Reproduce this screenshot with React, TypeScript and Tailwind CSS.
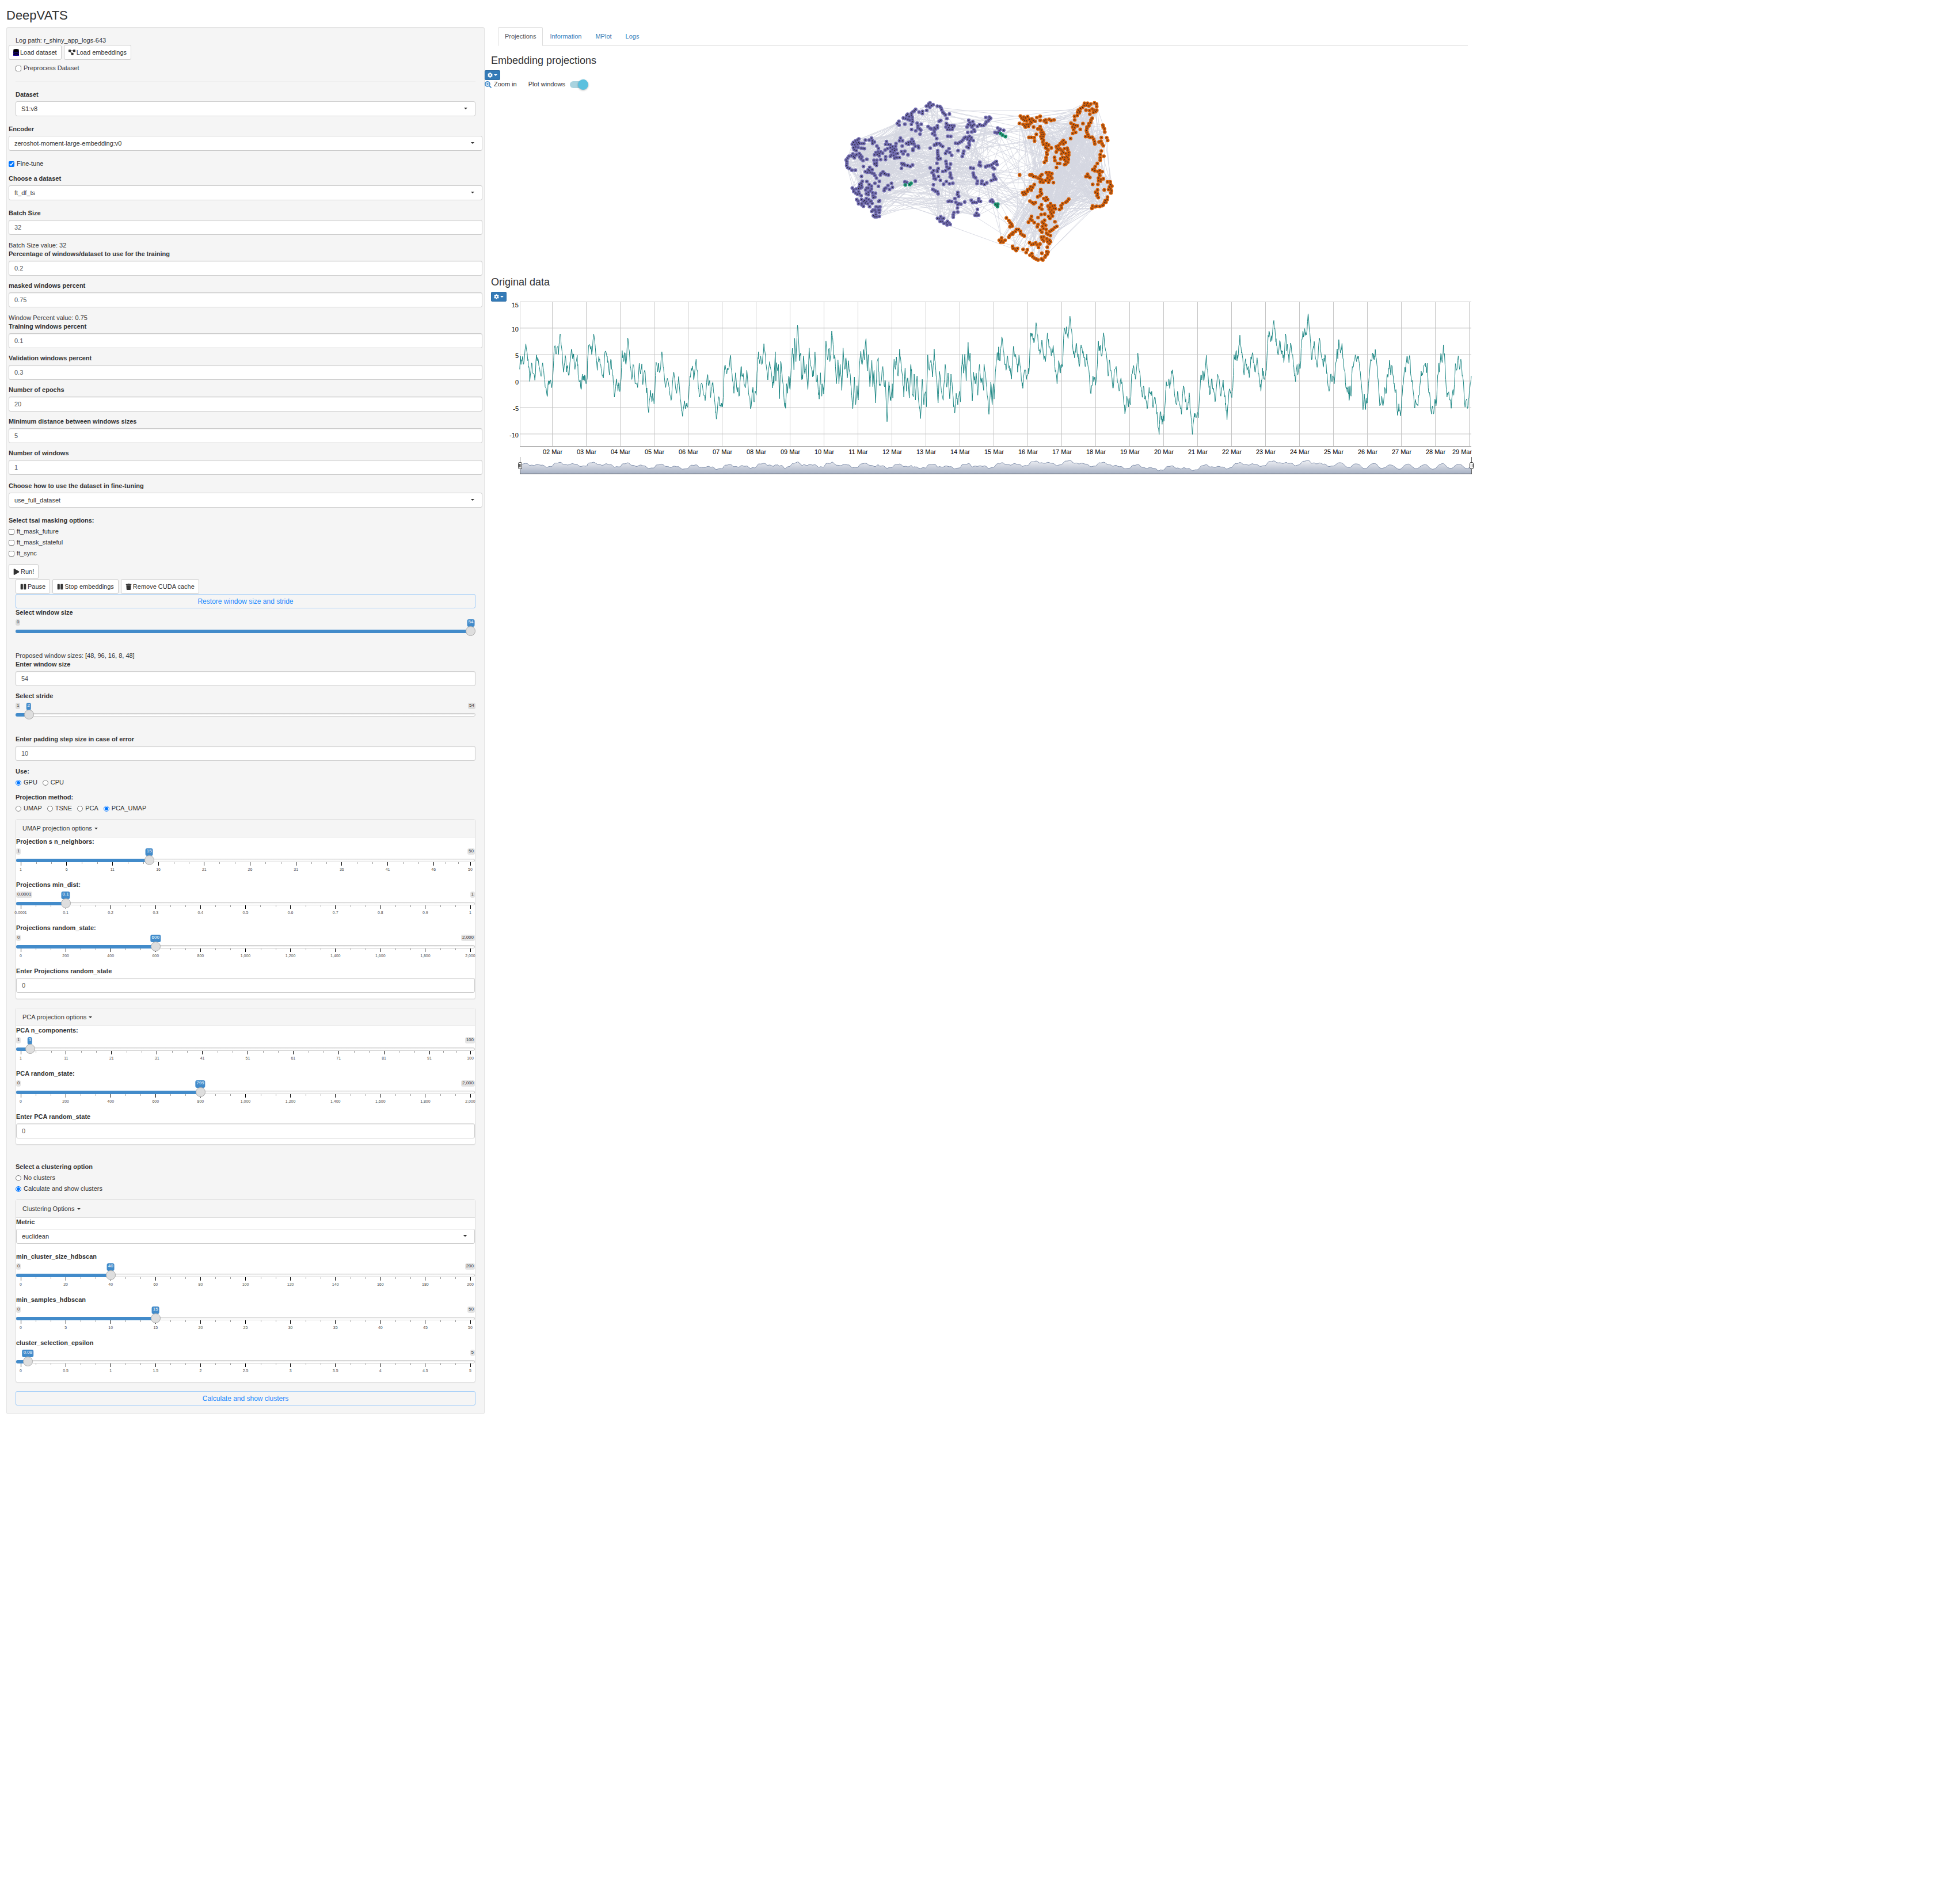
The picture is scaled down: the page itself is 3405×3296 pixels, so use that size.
import React, { useId, useState } from "react";
import { FaCog, FaPause, FaPlay, FaSearchPlus, FaTrash } from "react-icons/fa";
import { FaDiagramProject } from "react-icons/fa6";

/* ---------- form building blocks ---------- */

const labelClass = "block text-[11px] leading-[15px] font-bold";

function Caret({ className = "" }: { className?: string }) {
  return (
    <span
      aria-hidden
      className={`inline-block h-0 w-0 border-x-3 border-t-3 border-x-transparent border-t-current ${className}`}
    />
  );
}

function NumberField({ label, value, className = "" }: { label: string; value: string; className?: string }) {
  const id = useId();
  return (
    <div className={`mb-[10px] ${className}`}>
      <label htmlFor={id} className={`${labelClass} mb-1`}>
        {label}
      </label>
      <input
        id={id}
        type="number"
        step="any"
        defaultValue={value}
        className="block h-[26px] w-full rounded-[3px] border border-[#ccc] bg-white px-[9px] text-[11px] text-[#555] shadow-[inset_0_1px_1px_rgba(0,0,0,0.075)]"
      />
    </div>
  );
}

function SelectField({ label, value, className = "" }: { label: string; value: string; className?: string }) {
  const id = useId();
  return (
    <div className={`mb-[15px] ${className}`}>
      <label htmlFor={id} className={`${labelClass} mb-1`}>
        {label}
      </label>
      <div className="relative">
        <select
          id={id}
          className="block h-[26px] w-full appearance-none rounded-[3px] border border-[#ccc] bg-white px-[9px] text-[11px] text-[#333]"
        >
          <option>{value}</option>
        </select>
        <Caret className="pointer-events-none absolute top-[11px] right-[14px]" />
      </div>
    </div>
  );
}

function Tick({ type, name, label, checked = false }: { type: "checkbox" | "radio"; name: string; label: string; checked?: boolean }) {
  return (
    <label className="flex h-[15px] items-center gap-1 text-[11px] leading-[15px]">
      <input type={type} name={name} defaultChecked={checked} className="size-[10px]" />
      {label}
    </label>
  );
}

type SliderProps = {
  label: string;
  min: number;
  max: number;
  value: number;
  step?: number;
  ticks?: number[];
  showMin?: boolean;
};

const fmt = (n: number) => n.toLocaleString("en-US", { maximumFractionDigits: 4 });

function SliderField({ label, min, max, value, step = 1, ticks = [], showMin = true }: SliderProps) {
  const id = useId();
  const [current, setCurrent] = useState(value);
  const pct = (n: number) => ((n - min) / (max - min)) * 100;
  const minor = ticks
    .slice(0, -1)
    .flatMap((t, i) => [t + (ticks[i + 1] - t) / 3, t + ((ticks[i + 1] - t) * 2) / 3]);
  const pill = "h-[11px] rounded-[3px] px-[2px] text-[8px] leading-[10px]";
  return (
    <div className="h-[75px]">
      <label htmlFor={id} className={labelClass}>
        {label}
      </label>
      <div className="relative pt-1">
        <div className="flex h-3 justify-between">
          <span className={`${pill} bg-black/10 ${showMin ? "" : "invisible"}`}>{fmt(min)}</span>
          <span className={`${pill} bg-black/10 ${current === max ? "invisible" : ""}`}>{fmt(max)}</span>
        </div>
        <div className="absolute inset-x-2 top-1">
          <span
            className="absolute top-0 h-[13px] -translate-x-1/2 rounded-[3px] bg-[#428bca] px-[2px] text-[8px] leading-[10px] text-white"
            style={{ left: `${pct(current)}%` }}
          >
            {fmt(current)}
          </span>
        </div>
        <div className="mt-[6px] h-[6px] rounded-[4px] bg-[#ccc] bg-gradient-to-b from-[#dedede] to-white to-60% shadow-[inset_0_0_0_1px_#ccc]">
          <div className="h-[6px] rounded-l-[4px] bg-[#428bca]" style={{ width: `${Math.max(1, pct(current) * 0.98 + 1)}%` }} />
        </div>
        <div className="absolute inset-x-2 top-[28px]">
          {minor.map((t) => (
            <span key={t} className="absolute h-[3px] w-px bg-[#999]" style={{ left: `${pct(t)}%` }} />
          ))}
          {ticks.map((t) => (
            <span key={t} className="absolute flex w-0 flex-col items-center" style={{ left: `${pct(t)}%` }}>
              <span className="h-[6px] w-px shrink-0 bg-black" />
              <span className="mt-[2px] text-[7px] leading-[10px] text-[#555]">{fmt(t)}</span>
            </span>
          ))}
        </div>
        <input
          id={id}
          type="range"
          min={min}
          max={max}
          step={step}
          value={current}
          onChange={(e) => setCurrent(Number(e.target.value))}
          className="absolute inset-x-0 top-4 h-[17px] w-full appearance-none bg-transparent [&::-webkit-slider-thumb]:size-[17px] [&::-webkit-slider-thumb]:appearance-none [&::-webkit-slider-thumb]:rounded-full [&::-webkit-slider-thumb]:border [&::-webkit-slider-thumb]:border-[#ababab] [&::-webkit-slider-thumb]:bg-[#dedede]"
        />
      </div>
    </div>
  );
}

function IconButton({ icon, children }: { icon: React.ReactNode; children: React.ReactNode }) {
  return (
    <button
      type="button"
      className="flex h-[26px] items-center gap-[2px] rounded-[3px] border border-[#ccc] bg-white px-[7px] text-[11px] leading-[15px] whitespace-nowrap"
    >
      {icon}
      {children}
    </button>
  );
}

function OutlineButton({ children }: { children: React.ReactNode }) {
  return (
    <button type="button" className="block h-[25px] w-full rounded-[3px] border border-[#99c9f9] text-center text-xs text-[#1d89ff]">
      {children}
    </button>
  );
}

function Panel({ title, className = "", children }: { title: string; className?: string; children: React.ReactNode }) {
  return (
    <section className={`rounded-[3px] border border-[#ddd] bg-white shadow-[0_1px_1px_rgba(0,0,0,0.05)] ${className}`}>
      <button
        type="button"
        className="flex h-[31px] w-full items-center gap-1 border-b border-[#ddd] bg-[#f5f5f5] px-[11px] text-[11px]"
      >
        {title}
        <Caret />
      </button>
      {children}
    </section>
  );
}

function GearButton({ className = "" }: { className?: string }) {
  return (
    <button
      type="button"
      aria-label="Plot options"
      className={`flex h-[17px] w-[27px] items-center justify-center gap-[2px] rounded-[2px] border border-[#2e6da4] bg-[#337ab7] text-white ${className}`}
    >
      <FaCog size={9} />
      <Caret />
    </button>
  );
}

function DatabaseIcon() {
  return (
    <svg width="10" height="12" viewBox="0 0 10 12" aria-hidden>
      <rect y="3" width="10" height="9" fill="#2a0bd0" />
      <ellipse cx="5" cy="2" rx="4.8" ry="1.9" />
      <path d="M.2 2.6Q5 5 9.8 2.6V4.4Q5 7 .2 4.4Z" />
      <path d="M.2 5.4Q5 7.8 9.8 5.4V7.4Q5 10 .2 7.4Z" />
      <path d="M.2 8.4Q5 10.8 9.8 8.4V10.2Q5 12.8 .2 10.2Z" />
    </svg>
  );
}

/* ---------- embedding scatter ---------- */

const PURPLE = `527,86;520,92;508,103;517,102;543,96;535,100;526,108;510,125;488,130;470,134;487,142;452,120;445,128;438,133;430,140;410,145;405,152;418,158;430,150;434,160;388,165;400,168;412,172;422,176;434,172;436,184;365,182;357,193;366,202;396,197;430,198;460,192;481,197;464,206;464,217;431,225;453,232;473,222;479,228;475,249;565,103;578,105;584,112;588,122;594,135;600,142;607,149;628,144;615,168;583,178;575,182;517,210;527,218;533,222;550,217;565,206;566,216;556,222;548,228;549,238;540,247;552,254;562,272;612,194;618,202;628,205;640,205;652,206;610,212;625,215;645,215;618,224;630,225;642,224;620,260;635,261;729,177;735,190;750,184;726,200;738,202;748,206;720,212;745,212;756,200;774,208;785,200;795,204;806,204;815,196;820,186;818,162;836,160;843,166;835,172;830,180;724,240;744,238;756,226;760,234;880,217;893,224;888,232;911,229;866,240;876,243;884,240;733,260;742,268;725,266;712,265;705,270;722,275;740,275;733,284;752,283;698,280;690,288;682,292;672,298;660,296;730,296;732,306;720,316;728,320;673,335;703,338;700,350;695,365;562,298;575,298;550,306;560,304;583,306;593,313;528,322;567,336;567,346;568,356;570,365;566,374;580,377;570,380;608,349;615,338;626,325;630,345;640,359;563,401;610,391;634,405;612,404;615,420;622,430;608,440;594,444;628,426;528,425;570,428;565,437;565,444;545,440;538,450;546,462;548,468;571,470;556,483;548,480;632,452;634,462;632,472;640,478;581,490;612,496;628,508;646,505;598,510;545,513;541,537;548,541;556,546;566,550;569,560;739,425;753,427;787,396;783,410;790,414;817,420;826,415;836,414;848,410;857,402;866,396;873,392;876,408;855,424;862,430;752,452;754,462;757,472;765,477;774,494;772,507;798,494;795,507;811,511;823,503;846,491;858,487;866,481;858,462;862,472;870,484;672,553;670,563;676,573;657,585;630,598;622,600;640,600;662,604;678,612;688,614;672,616;708,603;742,594;750,606;758,604;768,606;780,598;781,586;790,600;850,592;842,598;855,602;670,634;672,655;652,658;648,670;648,682;774,641;770,661;762,672;772,672;780,671;566,688;575,690;583,680;590,690;598,688;580,704;590,704;600,714;612,712;618,704;626,712;632,720;616,722;156,274;148,280;138,285;128,292;143,295;155,292;122,302;135,305;150,302;160,298;128,320;140,316;152,318;132,330;142,335;168,322;178,323;185,325;172,298;182,298;190,280;210,280;222,270;226,282;228,290;237,290;228,298;250,311;258,323;238,357;245,345;252,355;262,350;270,342;262,362;256,342;280,348;293,332;300,288;296,302;310,303;305,325;320,305;320,320;332,315;340,325;350,298;348,312;330,330;343,335;350,330;322,340;335,345;350,352;358,350;325,358;320,365;338,360;350,370;342,374;355,372;367,371;373,270;368,284;384,284;382,311;378,340;396,338;387,352;412,357;404,298;415,292;425,290;433,276;440,288;432,298;415,302;443,300;450,312;465,312;468,320;438,327;438,334;296,367;295,382;270,382;250,385;235,385;238,402;248,400;248,412;240,405;105,364;117,362;125,352;128,365;137,360;145,356;158,350;165,358;160,368;172,368;168,378;178,387;198,380;98,374;90,384;94,392;94,402;93,413;98,424;108,428;120,437;138,437;133,372;180,418;213,422;225,434;205,435;190,445;200,448;215,448;225,452;235,456;240,465;248,478;210,440;268,462;272,454;282,446;290,455;298,460;310,462;170,469;380,402;378,427;390,404;395,410;410,413;424,418;436,410;384,408;174,495;198,496;168,505;160,512;170,516;158,524;172,525;122,530;130,540;142,535;155,533;165,530;130,548;140,556;155,550;158,560;148,562;168,570;145,590;152,598;155,612;170,590;180,600;172,610;185,596;195,600;180,625;172,618;195,585;208,590;215,600;190,608;203,612;212,627;225,610;220,598;205,552;195,560;205,565;192,540;205,530;210,512;198,530;222,535;215,545;228,555;230,570;243,557;240,577;232,580;240,505;263,495;258,521;222,520;290,535;297,530;288,544;308,517;326,505;331,526;316,537;396,498;406,500;450,494;264,596;260,600;246,628;256,630;266,628;230,645;224,652;240,645;258,645;265,645;245,655;262,658;232,674;240,680;250,680;262,678;245,668`;

const ORANGE = `998,155;1005,165;1016,160;1025,165;1036,158;1012,172;1020,178;1030,180;1045,172;1058,170;1065,178;1074,182;1050,182;993,193;1012,198;1020,206;1028,200;1038,198;1048,196;1055,188;1025,212;1040,208;1067,212;1101,156;1084,163;1101,177;1122,180;1130,175;1132,188;1148,172;1158,178;1173,175;1101,210;1089,222;1100,222;1108,228;1115,240;1106,240;1120,250;1110,252;1081,250;1105,262;1116,262;1110,272;1118,280;1115,290;1043,266;1055,266;1070,267;1072,285;1118,302;1134,298;1132,310;1145,306;1130,320;1136,325;1142,332;1135,345;1137,355;1132,372;1132,386;1123,396;1159,321;1185,315;1195,310;1205,300;1215,290;1222,282;1232,292;1222,300;1190,325;1204,325;1185,342;1195,330;1210,332;1218,338;1228,325;1242,322;1245,332;1250,345;1212,352;1222,346;1235,350;1250,358;1240,365;1230,372;1218,370;1208,378;1228,382;1245,372;1248,380;1235,390;1245,395;1235,405;1228,408;1176,370;1178,387;1192,402;1203,402;1186,423;1260,272;1332,88;1348,88;1365,92;1384,86;1395,92;1396,105;1355,102;1342,98;1330,100;1322,110;1312,115;1300,124;1308,130;1296,135;1305,138;1340,124;1358,126;1372,118;1382,124;1396,124;1390,132;1378,135;1360,145;1294,152;1280,156;1281,175;1324,194;1262,192;1275,200;1286,204;1295,206;1270,212;1280,216;1275,226;1310,224;1286,240;1271,245;1372,166;1366,176;1364,188;1355,195;1355,206;1345,212;1345,220;1342,230;1345,240;1350,252;1338,262;1352,262;1362,266;1372,265;1380,276;1384,288;1386,300;1428,202;1430,212;1436,222;1438,238;1420,267;1448,268;1453,282;1408,290;1418,286;1424,300;1430,310;1420,337;1414,356;1433,364;1414,372;1414,385;1399,402;1388,418;1375,434;1386,440;1383,430;1402,444;1412,440;1424,445;1410,456;1412,465;1405,478;1418,485;1430,482;1406,492;1416,494;1375,511;1402,511;1348,458;1340,470;1350,468;1360,475;1452,498;1466,498;1468,512;1475,520;1462,525;1468,535;1458,538;1472,545;1470,556;1435,540;1400,540;1390,552;1400,560;1398,570;1404,580;1452,577;1450,590;1440,596;1436,606;1444,604;1430,618;1425,622;1412,626;1395,625;1388,628;1374,624;1371,636;994,462;1048,462;1058,462;1066,470;1078,472;1090,478;1102,468;1110,460;1100,482;1110,488;1102,498;1116,500;1133,450;1148,450;1162,455;1142,462;1155,468;1140,478;1162,478;1150,488;1130,490;1145,500;1170,502;1070,512;1052,524;1062,526;1045,535;1035,540;1055,540;1010,555;1020,552;1026,560;1015,564;1036,546;1104,538;1103,550;1108,560;1100,570;1088,576;1120,585;1133,580;1140,590;1130,594;1048,598;1060,606;1068,612;1076,606;1108,618;1098,632;1110,640;1155,612;1142,624;1152,630;1165,624;1176,622;1172,635;1180,638;1148,640;1162,645;1155,655;1170,656;1160,665;1145,678;1165,676;1152,688;1250,588;1242,598;1235,604;1218,612;1210,622;1212,634;1202,642;1106,668;1125,666;1090,684;1056,678;1050,692;1058,698;1040,708;1070,710;1124,698;1112,708;1120,716;1130,724;1090,720;1086,732;1112,730;1118,742;1132,745;1102,750;1110,760;1178,706;1188,730;1178,736;1168,745;1160,750;1152,756;1134,765;1142,772;1154,778;1108,786;1120,785;1112,798;1120,806;1136,795;1150,802;1140,810;1155,810;1148,820;1138,838;925,686;938,700;944,710;952,718;955,728;944,732;978,746;988,746;972,756;960,762;950,770;958,770;942,778;938,786;998,756;1000,768;1010,775;1018,780;900,790;888,802;900,806;918,802;895,812;908,812;957,834;960,844;970,848;983,845;976,856;1012,850;1034,852;1028,866;1046,815;1056,825;1066,822;1078,816;1085,826;1092,840;1100,822;1058,872;1048,880;1062,888;1070,895;1080,900;1090,905;1110,870;1135,862;1142,864;1138,874;1130,882;1126,890;1108,900;1115,905`;

const GREEN = `895,246;905,254;920,262;398,514;421,512;428,505;869,615;880,614;876,620;879,627`;

type Pt = [number, number];

const parse = (s: string): Pt[] => s.split(";").map((p) => p.split(",").map(Number) as Pt);

const place = (s: string): Pt[] => parse(s).map(([x, y]) => [598 + x / 3, y / 3 - 6]);

function makeRandom(seed: number) {
  let s = seed;
  return () => {
    s = (s * 1664525 + 1013904223) % 4294967296;
    return s / 4294967296;
  };
}

const clusters = [
  { pts: place(PURPLE), rim: "#7570b3", core: "#6660a3" },
  { pts: place(ORANGE), rim: "#d95f02", core: "#bf5a14" },
  { pts: place(GREEN), rim: "#1b9e77", core: "#1f8c6c" },
];

function trajectories() {
  const rnd = makeRandom(17);
  const pick = (a: Pt[]) => a[Math.floor(rnd() * a.length)];
  const [purple, orange, green] = clusters.map((c) => c.pts);
  const left = purple.filter((p) => p[0] < 758);
  const middle = purple.filter((p) => p[0] >= 758);
  const east = orange.filter((p) => p[0] > 1000);
  const segs: [Pt, Pt][] = [];
  for (let i = 0; i < 300; i++) segs.push([pick(left), pick(left)]);
  for (let i = 0; i < 240; i++) segs.push([pick(left), pick(middle)]);
  for (let i = 0; i < 120; i++) segs.push([pick(middle), pick(middle)]);
  for (let i = 0; i < 300; i++) segs.push([pick(orange), pick(orange)]);
  for (let i = 0; i < 420; i++) segs.push([pick(east), pick(orange)]);
  for (let i = 0; i < 65; i++) segs.push([pick(middle), pick(orange)]);
  for (let i = 0; i < 14; i++) segs.push([pick(green), pick(i % 2 ? orange : middle)]);
  return segs.map(([a, b]) => `M${a[0].toFixed(1)} ${a[1].toFixed(1)}L${b[0].toFixed(1)} ${b[1].toFixed(1)}`).join("");
}

function EmbeddingPlot() {
  return (
    <svg viewBox="0 0 1716 309" className="mt-[2px] block w-full" role="img" aria-label="Embedding projections">
      <path d={trajectories()} stroke="#d5d7e1" strokeWidth="1" strokeOpacity="0.9" fill="none" />
      {clusters.map(({ pts, rim, core }) => (
        <g key={rim}>
          {pts.map(([x, y], i) => (
            <circle key={i} cx={x} cy={y} r="3.2" fill={rim} />
          ))}
          {pts.map(([x, y], i) => (
            <circle key={i} cx={x} cy={y} r="2" fill={core} />
          ))}
          {pts.map(([x, y], i) => (
            <circle key={i} cx={x} cy={y} r="0.8" fill="#222" />
          ))}
        </g>
      ))}
    </svg>
  );
}

/* ---------- time series ---------- */

const SERIES_A = `112,515;114,445;116,490;121,448;124,488;131,383;137,470;140,500;143,578;149,482;152,535;157,542;159,572;164,440;170,470;174,515;178,552;183,482;188,560;192,610;197,657;201,575;205,590;208,572;210,605;214,575;217,470;220,395;224,435;229,398;232,438;237,331;242,405;245,480;248,530;253,443;257,528;260,495;265,545;272,410;276,460;279,435;283,515;290,442;293,545;298,575;302,620;306,540;310,570;313,545;317,590;321,560;322,470;325,393;331,410;333,395;335,438;341,331;346,400;352,520;357,448;361,490;366,535;371,560;376,423;382,450;385,470;390,545;394,463;398,515;402,590;405,660;409,605;412,565;416,630;420,590;423,625;426,560;429,417;434,475;437,430;441,490;446,352;450,410;454,495;459,568;463,490;468,560;472,590;477,610;482,483;486,540;490,487;493,595;499,520;503,600;507,650;511,740;517,625;521,685;524,640;528,695;531,600;534,478;539,528;542,485;546,530;552,424;556,500;560,560;564,610;569,562;574,605;577,650;582,670;588,530;592,560;598,640;604,553;608,640;611,690;616,760;622,680;626,720;629,690;631,712;635,665;639,550;643,510;648,515;651,570;658,463;662,520;665,610;669,660;675,587;681,650;686,678;693,542;697,600;700,573;703,662;707,605;710,580;715,670;718,740;722,770;728,657;732,705;736,690;738,710;741,690;744,560;748,492;753,540;755,508;760,505;764,442;768,520;772,580;775,640;780,533;785,630;788,610;792,652;797,502;801,545;805,560;810,612;815,520;819,600;823,660;827,722;832,620;835,630;838,685;841,628;844,650;848,500;851,424;855,485;858,445;863,485;868,382;873,450;876,510;880,570;886,475;890,520;895,612;898,550;899,600;903,424;905,575;907,480;911,525;913,490;916,668;920,473;924,540;928,600;931,690;935,718;938,590;941,640;945,550;949,620;952,520;956,405;959,435;961,518;963,353;967,475;972,286;976,390;978,470;982,430;984,550;988,565;990,445;995,540;999,490;1004,620;1008,404;1012,490;1017,525;1021,550;1026,425;1030,580;1033,545;1036,620;1039,670;1043,533;1047,655;1050,590;1053,645;1056,570;1060,368;1065,465;1070,405;1072,475;1075,440;1078,315;1082,385;1085,460;1088,450;1092,590;1097,465;1100,590;1104,490;1109,625;1113,404;1118,515;1122,455;1126,560;1130,470;1134,530;1138,610;1143,722;1148,555;1152,700;1156,600;1160,675;1163,520;1168,420;1172,490;1176,412;1179,465;1184,355;1188,525;1191,438;1196,605;1202,468;1205,605;1209,520;1214,690;1218,475;1222,455;1225,600;1230,590;1236,500;1240,600;1244,577;1249,788;1255,580;1258,640;1261,680;1265,590;1267,665;1271,463;1275,515;1278,450;1283,550;1288,410;1292,475;1297,550;1301,660;1305,508;1309,630;1313,560;1318,665;1322,500;1325,515;1327,640;1332,640;1333,540;1337,675;1342,550;1346,665;1353,772;1358,567;1363,700;1368,632;1371,710;1375,440;1380,520;1385,467;1390,555;1395,409;1400,520;1403,572;1407,690;1411,526;1417,625;1423,676;1429,490;1434,608;1438,534;1443,668;1447,540;1452,630;1455,710;1459,742;1463,640;1468,700;1473,630;1476,685;1479,540;1482,437;1486,535;1490,436;1494,575;1500,374;1502,465;1506,430;1509,560;1513,680;1517,530;1522,590;1525,535;1530,650;1535,490;1540,585;1543,560;1548,625`;

const SERIES_B = `17,396;24,505;28,570;32,660;38,492;42,610;46,500;48,580;52,440;55,380;59,340;61,378;62,308;65,380;67,380;72,256;77,330;80,375;85,430;90,355;94,420;98,420;102,476;108,305;113,360;118,375;121,440;125,352;130,420;134,490;137,524;142,430;145,435;148,478;153,450;157,418;161,236;165,250;168,270;173,280;178,182;183,245;187,330;190,347;196,273;200,340;207,385;213,236;218,310;222,325;225,355;231,301;236,410;240,450;243,500;248,380;252,440;256,400;260,410;265,215;269,240;272,203;277,265;283,148;288,220;292,320;297,365;302,290;305,340;308,345;312,410;316,320;320,310;326,365;332,408;335,345;340,420;344,490;348,552;354,460;358,480;360,465;362,508;366,440;371,278;373,330;377,300;382,355;387,235;392,315;396,350;401,460;405,375;410,430;413,470;417,523;421,425;426,410;430,490;435,538;441,470;445,510;449,590;453,656;459,565;463,615;466,575;470,610;474,450;480,405;483,450;487,460;493,340;497,430;501,470;504,540;508,570;511,513;515,580;519,590;523,628;528,520;532,555;536,540;540,625;545,570;550,610;554,700;559,765;562,650;564,645;568,712;571,660;574,695;578,590;581,490;585,510;589,475;592,525;596,460;600,428;605,520;609,575;613,610;616,540;620,590;624,620;628,660;634,512;639,565;643,620;647,635;652,548;656,640;662,765;668,655;671,660;675,670;677,650;680,678;684,560;688,455;691,480;694,432;698,480;705,352;709,430;713,520;717,553;721,475;726,530;730,550;733,590;740,451;745,480;750,565;757,480;762,570;765,600;769,688;775,540;780,550;784,572;787,520;791,350;794,370;797,330;800,380;804,350;809,247;814,340;818,370;822,455;827,370;831,430;835,410;838,468;843,360;848,338;852,390;857,440;862,365;866,450;870,480;874,540;879,418;883,475;887,460;891,430;895,290;899,225;903,265;907,250;908,275;914,170;919,255;922,300;927,350;932,275;937,345;941,330;945,390;950,240;954,330;956,295;961,390;966,288;971,350;975,400;978,460;981,490;986,400;988,455;992,395;996,418;1000,270;1004,225;1007,245;1010,218;1015,245;1020,135;1024,220;1028,290;1031,375;1035,320;1039,280;1043,370;1048,415;1055,262;1060,340;1064,375;1068,405;1072,348;1076,400;1080,480;1085,540;1090,450;1094,490;1097,460;1101,500;1106,390;1110,318;1112,370;1115,270;1120,340;1125,290;1129,375;1133,430;1137,520;1141,545;1144,515;1147,587;1150,510;1153,565;1157,410;1162,385;1166,350;1170,385;1176,357;1180,430;1185,500;1190,635;1194,555;1197,635;1200,575;1203,600;1207,500;1213,375;1217,380;1220,340;1225,375;1228,322;1233,400;1237,480;1242,615;1248,565;1252,615;1257,520;1262,550;1264,460;1268,460;1272,378;1276,455;1279,405;1284,465;1288,530;1292,530;1297,665;1301,605;1306,668;1310,580;1315,500;1318,425;1322,440;1326,357;1330,395;1334,353;1339,465;1344,520;1349,620;1353,590;1360,615;1364,560;1370,435;1374,455;1378,405;1383,393;1386,440;1389,393;1392,520;1396,545;1402,658;1405,615;1409,655;1413,580;1416,615;1420,500;1424,402;1427,435;1431,343;1435,390;1439,297;1444,400;1450,570;1454,545;1458,585;1463,628;1468,535;1471,560;1476,395;1480,430;1485,355;1489,425;1493,373;1497,460;1501,490;1506,622;1511,580;1514,628;1518,575;1522,500;1525,460`;

const keyPoints: Pt[] = [
  ...parse(SERIES_A).map(([x, y]): Pt => [x / 1.7818 - 2, y / 3 - 54]),
  ...parse(SERIES_B).map(([x, y]): Pt => [x / 1.7818 + 858, y / 3 - 24]),
];

/* Samples between the key values get a small deterministic jitter. */
function buildSeries(): Pt[] {
  const rnd = makeRandom(5);
  const out: Pt[] = [keyPoints[0]];
  for (let i = 1; i < keyPoints.length; i++) {
    const [x0, y0] = keyPoints[i - 1];
    const [x1, y1] = keyPoints[i];
    if (x1 - x0 > 1.6) {
      for (const f of [0.35, 0.65]) {
        out.push([x0 + (x1 - x0) * f, y0 + (y1 - y0) * f + (rnd() - 0.5) * 14]);
      }
    }
    out.push([x1, y1]);
  }
  return out;
}

const series = buildSeries();
const toPath = (pts: Pt[]) => pts.map(([x, y], i) => `${i ? "L" : "M"}${x.toFixed(1)} ${y.toFixed(1)}`).join("");
const overview = keyPoints.map(([x, y], i): Pt => {
  const prev = keyPoints[Math.max(0, i - 1)][1];
  const next = keyPoints[Math.min(keyPoints.length - 1, i + 1)][1];
  return [x, 276 + ((prev + 2 * y + next) / 4 - 41) * 0.104];
});
const days = Array.from({ length: 28 }, (_, i) => ({ x: 117 + i * 59, label: `${String(i + 2).padStart(2, "0")} Mar` }));
const levels = [
  { v: 15, y: 0.5, ty: 10 },
  { v: 10, y: 46, ty: 52 },
  { v: 5, y: 92, ty: 98 },
  { v: 0, y: 138, ty: 144 },
  { v: -5, y: 184, ty: 190 },
  { v: -10, y: 230, ty: 236 },
];

function RangeHandle({ x }: { x: number }) {
  return (
    <g stroke="#222" strokeWidth="1">
      <path d={`M${x} 270V299`} stroke="#666" />
      <rect x={x - 3} y="279.5" width="6" height="11" rx="2" fill="#fff" />
      <path d={`M${x - 1} 282V288M${x + 1} 282V288`} strokeWidth="0.7" />
    </g>
  );
}

function SeriesChart() {
  return (
    <svg
      viewBox="0 0 1716 304"
      className="block w-full overflow-visible"
      role="img"
      aria-label="Original data"
      fontFamily="Liberation Sans, Arial, sans-serif"
      fontSize="11"
    >
      <defs>
        <linearGradient id="overview-fill" x1="0" y1="0" x2="0" y2="1">
          <stop offset="0" stopColor="#f0f1f5" />
          <stop offset="1" stopColor="#a7b1c4" />
        </linearGradient>
      </defs>
      <g stroke="#c6c6c6">
        {levels.map((l) => (
          <path key={l.v} d={`M61 ${l.y}H1714`} />
        ))}
        {days.map((d) => (
          <path key={d.x} d={`M${d.x + 0.5} 0V251`} />
        ))}
      </g>
      <path d="M61.5 0V251.5" stroke="#c6c6c6" />
      <path d="M61 251.5H1714" stroke="#999" />
      <g fill="#000">
        {levels.map((l) => (
          <text key={l.v} x="59" y={l.ty} textAnchor="end">
            {l.v}
          </text>
        ))}
        {days.map((d) => (
          <text key={d.x} x={Math.min(d.x + 1, 1698)} y="265" textAnchor="middle">
            {d.label}
          </text>
        ))}
      </g>
      <path d={toPath(series)} fill="none" stroke="#1a8683" strokeWidth="1" strokeLinejoin="round" />
      <path d={`${toPath(overview)}L1714 299L61 299Z`} fill="url(#overview-fill)" />
      <path d={toPath(overview)} fill="none" stroke="#808fab" strokeWidth="1" />
      <path d="M61 299.5H1715" stroke="#333" />
      <RangeHandle x={61.5} />
      <RangeHandle x={1714.5} />
    </svg>
  );
}

/* ---------- page ---------- */

const range = (start: number, step: number, count: number) => Array.from({ length: count }, (_, i) => start + i * step);

function Sidebar() {
  return (
    <form className="rounded-[3px] border border-[#e3e3e3] bg-[#f5f5f5] px-[15px] pt-[15px] pb-[14px] shadow-[inset_0_1px_1px_rgba(0,0,0,0.05)]">
      <p className="leading-[15px]">Log path: r_shiny_app_logs-643</p>
      <div className="-mx-3 flex gap-1">
        <IconButton icon={<DatabaseIcon />}>Load dataset</IconButton>
        <IconButton icon={<FaDiagramProject size={12} />}>Load embeddings</IconButton>
      </div>
      <div className="mt-[7px]">
        <Tick type="checkbox" name="preprocess" label="Preprocess Dataset" />
      </div>
      <hr className="my-[15px] border-[#eee]" />
      <SelectField label="Dataset" value="S1:v8" />

      <div className="-mx-3">
        <SelectField label="Encoder" value="zeroshot-moment-large-embedding:v0" />
        <Tick type="checkbox" name="fine_tune" label="Fine-tune" checked />
        <SelectField label="Choose a dataset" value="ft_df_ts" className="mt-[11px]" />
        <NumberField label="Batch Size" value="32" />
        <p className="mt-[11px] leading-[15px]">Batch Size value: 32</p>
        <NumberField label="Percentage of windows/dataset to use for the training" value="0.2" />
        <NumberField label="masked windows percent" value="0.75" />
        <p className="mt-[11px] leading-[15px]">Window Percent value: 0.75</p>
        <NumberField label="Training windows percent" value="0.1" />
        <NumberField label="Validation windows percent" value="0.3" />
        <NumberField label="Number of epochs" value="20" />
        <NumberField label="Minimum distance between windows sizes" value="5" />
        <NumberField label="Number of windows" value="1" />
        <SelectField label="Choose how to use the dataset in fine-tuning" value="use_full_dataset" className="mt-3" />
        <fieldset className="flex flex-col gap-1">
          <legend className={`${labelClass} mb-1`}>Select tsai masking options:</legend>
          <Tick type="checkbox" name="mask" label="ft_mask_future" />
          <Tick type="checkbox" name="mask" label="ft_mask_stateful" />
          <Tick type="checkbox" name="mask" label="ft_sync" />
        </fieldset>
        <div className="mt-[11px] flex">
          <IconButton icon={<FaPlay size={11} />}>Run!</IconButton>
        </div>
      </div>

      <div className="flex gap-1">
        <IconButton icon={<FaPause size={11} />}>Pause</IconButton>
        <IconButton icon={<FaPause size={11} />}>Stop embeddings</IconButton>
        <IconButton icon={<FaTrash size={11} />}>Remove CUDA cache</IconButton>
      </div>
      <OutlineButton>Restore window size and stride</OutlineButton>
      <SliderField label="Select window size" min={0} max={54} value={54} />
      <p className="leading-[15px]">Proposed window sizes: [48, 96, 16, 8, 48]</p>
      <NumberField label="Enter window size" value="54" />
      <SliderField label="Select stride" min={1} max={54} value={2} />
      <NumberField label="Enter padding step size in case of error" value="10" />
      <fieldset className="mt-[11px] flex gap-[9px]">
        <legend className={`${labelClass} mb-1`}>Use:</legend>
        <Tick type="radio" name="device" label="GPU" checked />
        <Tick type="radio" name="device" label="CPU" />
      </fieldset>
      <fieldset className="mt-[11px] flex gap-[9px]">
        <legend className={`${labelClass} mb-1`}>Projection method:</legend>
        <Tick type="radio" name="method" label="UMAP" />
        <Tick type="radio" name="method" label="TSNE" />
        <Tick type="radio" name="method" label="PCA" />
        <Tick type="radio" name="method" label="PCA_UMAP" checked />
      </fieldset>

      <Panel title="UMAP projection options" className="mt-[11px]">
        <SliderField label="Projection s n_neighbors:" min={1} max={50} value={15} ticks={[...range(1, 5, 10), 50]} />
        <SliderField
          label="Projections min_dist:"
          min={0.0001}
          max={1}
          value={0.1}
          step={0.0001}
          ticks={[0.0001, 0.1, 0.2, 0.3, 0.4, 0.5, 0.6, 0.7, 0.8, 0.9, 1]}
        />
        <SliderField label="Projections random_state:" min={0} max={2000} value={600} ticks={range(0, 200, 11)} />
        <NumberField label="Enter Projections random_state" value="0" />
      </Panel>
      <Panel title="PCA projection options" className="mt-[15px]">
        <SliderField label="PCA n_components:" min={1} max={100} value={3} ticks={[...range(1, 10, 10), 100]} />
        <SliderField label="PCA random_state:" min={0} max={2000} value={799} ticks={range(0, 200, 11)} />
        <NumberField label="Enter PCA random_state" value="0" />
      </Panel>

      <fieldset className="mt-[31px] flex flex-col gap-1">
        <legend className={`${labelClass} mb-1`}>Select a clustering option</legend>
        <Tick type="radio" name="clusters" label="No clusters" />
        <Tick type="radio" name="clusters" label="Calculate and show clusters" checked />
      </fieldset>
      <Panel title="Clustering Options" className="mt-[11px] mb-[15px]">
        <SelectField label="Metric" value="euclidean" />
        <SliderField label="min_cluster_size_hdbscan" min={0} max={200} value={40} ticks={range(0, 20, 11)} />
        <SliderField label="min_samples_hdbscan" min={0} max={50} value={15} ticks={range(0, 5, 11)} />
        <SliderField label="cluster_selection_epsilon" min={0} max={5} value={0.08} step={0.01} ticks={range(0, 0.5, 11)} showMin={false} />
      </Panel>
      <OutlineButton>Calculate and show clusters</OutlineButton>
    </form>
  );
}

export default function App() {
  return (
    <div className="bg-white pl-[11px] font-['Liberation_Sans',Arial,sans-serif] text-[11px] text-[#333]">
      <h1 className="mb-2 pt-[14px] text-[22px] leading-[25px]">DeepVATS</h1>
      <div className="grid grid-cols-[831fr_1716fr_847fr] items-start">
        <Sidebar />
        <main>
          <nav className="mr-2 ml-[23px] flex h-[33px] border-b border-[#ddd] text-[#337ab7]">
            <a href="#projections" className="-mb-px flex items-center rounded-t-[3px] border border-b-white border-[#ddd] px-[11px] text-[#555]">
              Projections
            </a>
            <a href="#information" className="flex items-center px-3">
              Information
            </a>
            <a href="#mplot" className="flex items-center px-3">
              MPlot
            </a>
            <a href="#logs" className="flex items-center px-3">
              Logs
            </a>
          </nav>
          <h2 className="mt-[15px] mb-[7px] ml-[11px] text-[18px] leading-5">Embedding projections</h2>
          <GearButton />
          <div className="flex h-[15px] items-center">
            <button type="button" className="flex items-center gap-1">
              <FaSearchPlus size={12} className="text-[#428bca]" />
              Zoom in
            </button>
            <label className="ml-5 flex items-center gap-2">
              Plot windows
              <input
                type="checkbox"
                role="switch"
                defaultChecked
                className="relative h-3 w-8 appearance-none rounded-full bg-[#a9d3df] before:absolute before:-top-[3px] before:right-0 before:size-[18px] before:rounded-full before:bg-[#5bc0de] before:shadow-[0_1px_3px_rgba(0,0,0,0.3)] before:content-['']"
              />
            </label>
          </div>
          <EmbeddingPlot />
          <h2 className="mt-[15px] mb-[7px] ml-[11px] text-[18px] leading-5">Original data</h2>
          <GearButton className="ml-[11px]" />
          <SeriesChart />
        </main>
      </div>
    </div>
  );
}
